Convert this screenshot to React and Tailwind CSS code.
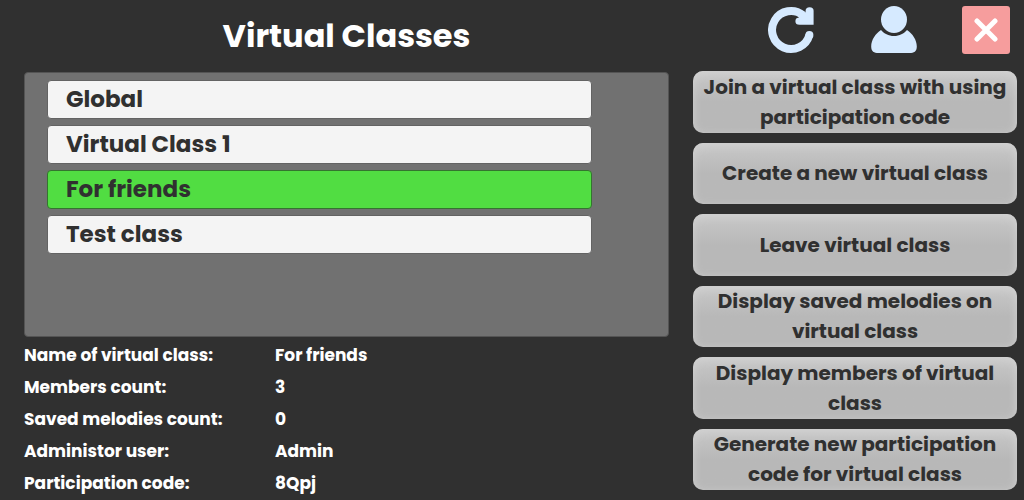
import { useState } from 'react'

const classes = [
  { name: 'Global', members: 12, melodies: 4, admin: 'Admin', code: '-' },
  { name: 'Virtual Class 1', members: 5, melodies: 2, admin: 'Admin', code: '4Kdm' },
  { name: 'For friends', members: 3, melodies: 0, admin: 'Admin', code: '8Qpj' },
  { name: 'Test class', members: 1, melodies: 0, admin: 'Admin', code: '2Rtx' },
]

const actions = [
  'Join a virtual class with using participation code',
  'Create a new virtual class',
  'Leave virtual class',
  'Display saved melodies on virtual class',
  'Display members of virtual class',
  'Generate new participation code for virtual class',
]

function RefreshIcon() {
  return (
    <svg viewBox="0 -1 46 48" className="h-12 w-[46px]" aria-hidden="true">
      <path
        d="M41.4 28A19 19 0 1 1 35 8.2"
        fill="none"
        stroke="#d6eaff"
        strokeWidth="8"
        strokeLinecap="butt"
      />
      <circle cx="41.4" cy="28" r="4" fill="#d6eaff" />
      <path
        d="M33 5.8L37.6 5.2V3.8Q37.6 .2 41.6 .2Q45.6 .2 45.6 3.8V17.8H31.5Q27.4 17.8 27.4 14.2Q27.4 11 30.8 10.6Z"
        fill="#d6eaff"
      />
    </svg>
  )
}

function UserIcon() {
  return (
    <svg viewBox="0 0 46 48" className="h-12 w-[46px]" aria-hidden="true" fill="#d6eaff">
      <ellipse cx="23" cy="13.5" rx="13" ry="13.5" />
      <path d="M10 24C13 27.5 17.5 30 23 30S33 27.5 36 24C41.5 27.5 45.8 34 45.8 40.5C45.8 45.5 43 47 38.5 47H7.5C3 47 .2 45.5 .2 40.5C.2 34 4.5 27.5 10 24Z" />
    </svg>
  )
}

function CloseIcon() {
  return (
    <svg viewBox="0 0 24 24" className="size-6" aria-hidden="true">
      <path d="M3 3L21 21M21 3L3 21" stroke="#fff" strokeWidth="5" strokeLinecap="round" />
    </svg>
  )
}

function ClassRow({ name, selected, onSelect }) {
  return (
    <li>
      <button
        type="button"
        aria-pressed={selected}
        onClick={onSelect}
        className={`flex h-[39px] w-full items-center rounded border pl-[18px] text-[23px] font-bold text-[#303030] ${
          selected ? 'border-[#34752f] bg-[#51dd42]' : 'border-[#636363] bg-[#f4f4f4]'
        }`}
      >
        {name}
      </button>
    </li>
  )
}

function App() {
  const [selected, setSelected] = useState(2)
  const current = classes[selected]

  const details = [
    ['Name of virtual class:', current.name],
    ['Members count:', current.members],
    ['Saved melodies count:', current.melodies],
    ['Administor user:', current.admin],
    ['Participation code:', current.code],
  ]

  return (
    <div className="flex min-h-screen gap-6 bg-[#303030] pl-6 pr-[7px] font-['Poppins','Inter',sans-serif] text-white">
      <main className="min-w-0 flex-1">
        <h1 className="flex h-[72px] items-center justify-center text-[32px] font-bold">Virtual Classes</h1>

        <ul className="flex h-[265px] flex-col gap-[6px] overflow-y-auto rounded border border-[#545454] bg-[#717171] pl-[22px] pr-[76px] pt-[7px]">
          {classes.map((item, index) => (
            <ClassRow
              key={item.name}
              name={item.name}
              selected={index === selected}
              onSelect={() => setSelected(index)}
            />
          ))}
        </ul>

        <dl className="pt-[3px] text-[17px] font-bold">
          {details.map(([label, value]) => (
            <div key={label} className="flex h-8 items-center">
              <dt className="w-[251px]">{label}</dt>
              <dd>{value}</dd>
            </div>
          ))}
        </dl>
      </main>

      <aside className="flex w-[324px] flex-col pb-[10px]">
        <div className="flex h-[71px] items-start justify-end gap-[45px] pr-[7px] pt-[6px]">
          <button type="button" aria-label="Refresh" className="mr-3">
            <RefreshIcon />
          </button>
          <button type="button" aria-label="User profile">
            <UserIcon />
          </button>
          <button
            type="button"
            aria-label="Close"
            className="flex size-12 items-center justify-center rounded-[3px] bg-[#f69d9d]"
          >
            <CloseIcon />
          </button>
        </div>

        <div className="grid flex-1 auto-rows-fr gap-[10px]">
          {actions.map((label) => (
            <button
              key={label}
              type="button"
              className="rounded-[10px] bg-linear-to-b from-[#c8c8c8] via-[#b8b8b8] to-[#b8b8b8] px-1 text-[20px] leading-[30px] font-bold text-[#303030] shadow-[inset_0_3px_10px_#d2d2d2]"
            >
              {label}
            </button>
          ))}
        </div>
      </aside>
    </div>
  )
}

export default App
